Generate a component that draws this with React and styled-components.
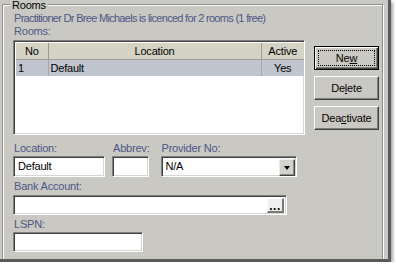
import React from 'react';
import styled, { createGlobalStyle } from 'styled-components';

const GlobalStyle = createGlobalStyle`
  html, body {
    margin: 0;
    padding: 0;
    background: #ffffff;
  }
  body {
    font-family: "Liberation Sans", Arial, sans-serif;
    font-size: 11px;
    letter-spacing: -0.2px;
  }
`;

const face = '#cac8c2';

const Window = styled.div`
  width: 388px;
  height: 259px;
  background: ${face};
  border-right: 3px solid #5a5a5a;
  border-bottom: 3px solid #5a5a5a;
  box-shadow: 2px 2px 3px rgba(0, 0, 0, 0.35);
  overflow: hidden;
  color: #000;
`;

const Group = styled.div`
  position: relative;
  box-sizing: border-box;
  width: 381px;
  height: 300px;
  margin: 4px 0 0 2px;
  border: 1px solid #8c8c8c;
  box-shadow: 1px 1px 0 #fff, inset 1px 1px 0 #fff;
  padding: 7px 0 0 10px;
`;

const Legend = styled.span`
  position: absolute;
  top: -6px;
  left: 7px;
  padding: 0 2px;
  line-height: 12px;
  background: ${face};
`;

const Info = styled.div`
  line-height: 13px;
  color: #4a5688;
  padding-left: 1px;
  letter-spacing: ${p => (p.$tight ? '-0.7px' : 'inherit')};
  white-space: nowrap;
`;

const TableRow = styled.div`
  display: flex;
  align-items: flex-start;
  gap: 9px;
  margin-top: 2px;
`;

const Sunken = styled.div`
  box-sizing: border-box;
  border: 1px solid;
  border-color: #808080 #fff #fff #808080;
  box-shadow: inset 1px 1px 0 #404040, inset -1px -1px 0 #d8d6d0;
  background: #fff;
`;

const TableBox = styled(Sunken)`
  width: 292px;
  height: 95px;
  padding: 2px;
`;

const Grid = styled.table`
  width: 288px;
  border-collapse: collapse;
  table-layout: fixed;
`;

const Head = styled.th`
  box-sizing: border-box;
  height: 16px;
  padding: 2px 0 0;
  line-height: 13px;
  font-weight: normal;
  text-align: center;
  vertical-align: top;
  background: #d5d4c4;
  border-right: 1px solid #9c9c92;
  border-bottom: 1px solid #9c9c92;
  &:last-child { border-right: none; }
`;

const Cell = styled.td`
  box-sizing: border-box;
  height: 16px;
  padding: 2px 2px 1px;
  line-height: 13px;
  text-align: ${p => p.$align || 'left'};
  vertical-align: top;
  background: #c1c5cf;
  border-right: 1px solid #a4a6ad;
  white-space: nowrap;
  &:last-child { border-right: none; }
`;

const Buttons = styled.div`
  display: flex;
  flex-direction: column;
  gap: 6px;
  margin-top: 6px;
`;

const Btn = styled.button`
  position: relative;
  box-sizing: border-box;
  width: 65px;
  height: 24px;
  padding: 0;
  font: inherit;
  letter-spacing: inherit;
  color: #000;
  background: ${face};
  border: 1px solid;
  border-color: ${p => (p.$default ? '#000' : '#fff #404040 #404040 #fff')};
  box-shadow: ${p =>
    p.$default
      ? 'inset 1px 1px 0 #fff, inset -1px -1px 0 #404040, inset -2px -2px 0 #808080'
      : 'inset -1px -1px 0 #808080'};
  &::after {
    content: '';
    display: ${p => (p.$default ? 'block' : 'none')};
    position: absolute;
    inset: 3px;
    border: 1px dotted #000;
  }
  u { text-decoration-thickness: 1px; text-underline-offset: 1px; }
`;

const FieldRow = styled.div`
  display: flex;
  margin-top: ${p => p.$top}px;
`;

const Field = styled.div`
  display: flex;
  flex-direction: column;
  gap: ${p => p.$gap || 1}px;
  margin-left: ${p => p.$left || 0}px;
`;

const Label = styled.div`
  line-height: 13px;
  color: #4a5688;
  padding-left: 1px;
`;

const Edit = styled(Sunken)`
  position: relative;
  width: ${p => p.$w}px;
  height: ${p => p.$h || 21}px;
  padding: 0 4px;
  display: flex;
  align-items: center;
  line-height: 13px;
`;

const DropBtn = styled.div`
  position: absolute;
  top: 2px;
  right: 1px;
  box-sizing: border-box;
  width: 16px;
  height: 17px;
  background: #d4d2cd;
  border: 1px solid;
  border-color: #eeece8 #404040 #404040 #eeece8;
  box-shadow: inset -1px -1px 0 #8a8a8a;
  display: flex;
  align-items: center;
  justify-content: center;
  &::before {
    content: '';
    border-left: 3.5px solid transparent;
    border-right: 3.5px solid transparent;
    border-top: 4px solid #000;
    margin-top: 1px;
  }
`;

const DotsBtn = styled.div`
  position: absolute;
  top: 2px;
  right: 2px;
  box-sizing: border-box;
  width: 17px;
  height: 15px;
  background: #efefef;
  border-right: 2px solid #7a7a7a;
  border-bottom: 2px solid #7a7a7a;
  border-top: 1px solid #fff;
  border-left: 1px solid #fff;
  display: flex;
  align-items: flex-end;
  justify-content: center;
  font-weight: bold;
  font-size: 12px;
  line-height: 10px;
  letter-spacing: 0.5px;
`;

export default function App() {
  return (
    <>
      <GlobalStyle />
      <Window>
        <Group>
          <Legend>Rooms</Legend>
          <Info $tight>Practitioner Dr Bree Michaels is licenced for 2 rooms (1 free)</Info>
          <Info>Rooms:</Info>
          <TableRow>
            <TableBox>
              <Grid>
                <colgroup>
                  <col style={{ width: 32 }} />
                  <col style={{ width: 213 }} />
                  <col style={{ width: 43 }} />
                </colgroup>
                <thead>
                  <tr>
                    <Head>No</Head>
                    <Head>Location</Head>
                    <Head>Active</Head>
                  </tr>
                </thead>
                <tbody>
                  <tr>
                    <Cell>1</Cell>
                    <Cell>Default</Cell>
                    <Cell $align="center">Yes</Cell>
                  </tr>
                </tbody>
              </Grid>
            </TableBox>
            <Buttons>
              <Btn $default>Ne<u>w</u></Btn>
              <Btn>De<u>l</u>ete</Btn>
              <Btn>Dea<u>c</u>tivate</Btn>
            </Buttons>
          </TableRow>

          <FieldRow $top={7}>
            <Field>
              <Label>Location:</Label>
              <Edit $w={92}>Default</Edit>
            </Field>
            <Field $left={7}>
              <Label>Abbrev:</Label>
              <Edit $w={37} />
            </Field>
            <Field $left={11}>
              <Label>Provider No:</Label>
              <Edit $w={136}>
                N/A
                <DropBtn />
              </Edit>
            </Field>
          </FieldRow>

          <FieldRow $top={3}>
            <Field $gap={2}>
              <Label>Bank Account:</Label>
              <Edit $w={274} $h={20}>
                <DotsBtn>...</DotsBtn>
              </Edit>
            </Field>
          </FieldRow>

          <FieldRow $top={3}>
            <Field>
              <Label>LSPN:</Label>
              <Edit $w={130} $h={20} />
            </Field>
          </FieldRow>
        </Group>
      </Window>
    </>
  );
}
